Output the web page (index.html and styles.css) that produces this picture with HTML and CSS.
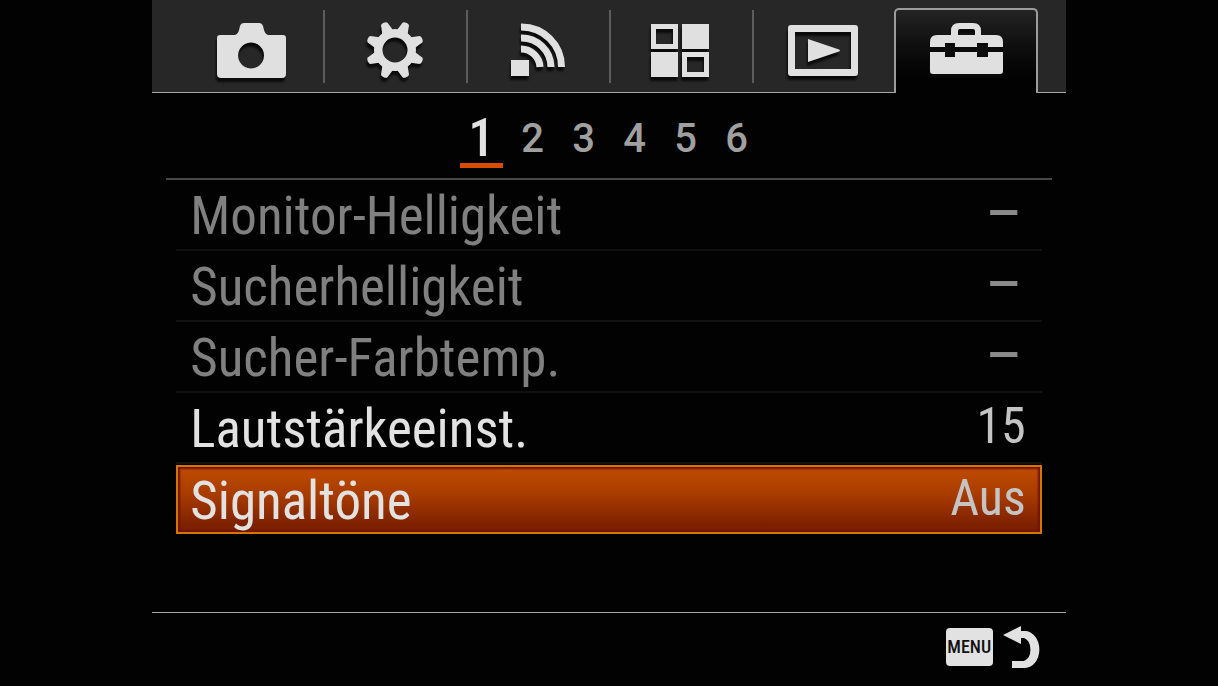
FILE: index.html
```html
<!DOCTYPE html>
<html lang="de">
<head>
<meta charset="utf-8">
<title>Setup</title>
<meta name="viewport" content="width=device-width, initial-scale=1">
<link rel="stylesheet" href="styles.css">
</head>
<body>
<main class="screen">
  <nav class="tabs" aria-label="Menü">
    <button class="tab" type="button" aria-label="Kamera">
      <svg class="icon" width="84" height="72" viewBox="0 0 84 72"><path fill-rule="evenodd" d="M10 25h15q3-1 4-5l1-4q1-3 4-3h15q3 0 4 3l1 4q1 4 4 5h15q3 0 3 3v36q0 4-4 4H11q-4 0-4-4V28q0-3 3-3zM41 32.500a13 13 0 1 0 .1 0z"/></svg>
    </button>
    <button class="tab" type="button" aria-label="Einstellungen">
      <svg class="icon" width="84" height="72" viewBox="-42 -36 84 72"><g transform="translate(0 4)"><path fill-rule="evenodd" d="M0-21A21 21 0 1 1 0 21A21 21 0 1 1 0-21zM0-12.500A12.500 12.500 0 1 0 0 12.500A12.500 12.500 0 1 0 0-12.500z"/><g id="teeth"><path id="tooth" transform="rotate(22.500)" d="M-6-18L-3.500-28Q-3-29.500 0-29.500Q3-29.500 3.500-28L6-18z"/><use href="#tooth" transform="rotate(45)"/><use href="#tooth" transform="rotate(90)"/><use href="#tooth" transform="rotate(135)"/></g><use href="#teeth" transform="rotate(180)"/></g></svg>
    </button>
    <button class="tab" type="button" aria-label="Drahtlos">
      <svg class="icon" width="84" height="72" viewBox="0 0 84 72"><path d="M15 50h18v16H15z"/><g class="arcs"><path d="M25 17A40 40 0 0 1 65.500 57"/><path d="M25 28A29.500 29.500 0 0 1 55 57"/><path d="M25 39A19 19 0 0 1 44 57"/></g></svg>
    </button>
    <button class="tab" type="button" aria-label="Anwendungen">
      <svg class="icon" width="84" height="72" viewBox="0 0 84 72"><path fill-rule="evenodd" d="M13 14h27v25H13zM18 19v15h17V19zM44 14h27v25H44zM13 42h27v25H13zM44 42h27v25H44zM49 47v15h17V47z"/></svg>
    </button>
    <button class="tab" type="button" aria-label="Wiedergabe">
      <svg class="icon" width="84" height="72" viewBox="0 0 84 72"><path fill-rule="evenodd" d="M10 15h64q3 0 3 3v45q0 3-3 3H10q-3 0-3-3V18q0-3 3-3zM14 22v37h56V22zM27 29L58 39.500q2 1 0 2L27 52z"/></svg>
    </button>
    <button class="tab tab-active" type="button" aria-label="Setup" aria-current="page">
      <svg class="icon" width="84" height="72" viewBox="0 0 84 72"><path fill-rule="evenodd" d="M6 37V32q0-7 7-7H27V21q0-8 8-8H49q8 0 8 8v4H72q7 0 7 7v5H64V33H53v4H31V33H21v4zM34 25H51V21q0-2-2-2H36q-2 0-2 2zM6 42H21v5H31V42H53v5H64V42H79V61q0 3-3 3H9q-3 0-3-3z"/></svg>
    </button>
  </nav>

  <nav class="pages" aria-label="Seiten">
    <button class="page page-active" type="button" aria-current="page">1</button>
    <button class="page" type="button">2</button>
    <button class="page" type="button">3</button>
    <button class="page" type="button">4</button>
    <button class="page" type="button">5</button>
    <button class="page" type="button">6</button>
  </nav>

  <section class="settings">
    <button class="row" type="button" disabled><span class="label">Monitor-Helligkeit</span><span class="value value-empty">–</span></button>
    <button class="row" type="button" disabled><span class="label">Sucherhelligkeit</span><span class="value value-empty">–</span></button>
    <button class="row" type="button" disabled><span class="label">Sucher-Farbtemp.</span><span class="value value-empty">–</span></button>
    <button class="row" type="button"><span class="label">Lautstärkeeinst.</span><span class="value">15</span></button>
    <button class="row row-selected" type="button"><span class="label">Signaltöne</span><span class="value">Aus</span></button>
  </section>

  <footer class="footer">
    <button class="back" type="button"><span class="menu-key">MENU</span>
      <svg class="arrow" width="37" height="44" viewBox="0 0 37 44" aria-hidden="true"><path d="M0 10L18 1V6H22A14 18 0 0 1 22 43H9V36H21A9 12 0 0 0 21 13H18V19z"/></svg>
    </button>
  </footer>
</main>
</body>
</html>
```
FILE: styles.css
```css
* { box-sizing: border-box; }

body {
  margin: 0;
  background: #020202;
  color: #e2e2e2;
  font-family: "Roboto Condensed", Roboto, "Liberation Sans", sans-serif;
}

button {
  margin: 0;
  padding: 0;
  border: 0;
  background: none;
  color: inherit;
  font: inherit;
}

.screen {
  display: flex;
  flex-direction: column;
  width: 75%;
  min-height: 100vh;
  margin: 0 auto;
}

.tabs {
  display: grid;
  grid-template-columns: repeat(6, 1fr);
  height: 93px;
  padding: 8px 28px 0;
  border-bottom: 1px solid #a8a8a8;
  background: #272727;
}

.tab {
  display: flex;
  justify-content: center;
  align-items: flex-start;
  padding-top: 2px;
}

.tab + .tab {
  background: linear-gradient(#5c5c5c, #5c5c5c) left 2px / 2px 73px no-repeat;
}

.tabs .tab-active {
  margin: 0 0 -1px -1px;
  padding-top: 0;
  border: 2px solid #9c9c9c;
  border-bottom: 0;
  border-radius: 5px 5px 0 0;
  background: linear-gradient(#242424, #101010 40%, #020202 80%);
}

.icon {
  fill: #e0e0e0;
  filter: drop-shadow(-1px 4px 1px #0a0a0a);
}

.arcs {
  fill: none;
  stroke: #e0e0e0;
  stroke-width: 7;
}

.pages {
  display: flex;
  justify-content: center;
  gap: 8px;
  height: 87px;
  margin: 0 14px;
  padding-top: 17px;
  border-bottom: 2px solid #484848;
}

.page {
  width: 43px;
  height: 58px;
  color: #a0a0a0;
  font-family: Roboto, sans-serif;
  font-size: 40px;
  font-weight: 500;
  line-height: 58px;
}

.page-active {
  border-bottom: 5px solid #d84c00;
  color: #e2e2e2;
  font-family: "Roboto Condensed", Roboto, sans-serif;
  font-size: 53px;
  line-height: 56px;
}

.settings {
  display: flex;
  flex-direction: column;
  padding: 0 24px;
}

.row {
  display: flex;
  justify-content: space-between;
  align-items: flex-start;
  height: 71px;
  padding: 0 16px 0 14px;
  border-bottom: 2px solid #111;
  line-height: 72px;
  text-align: left;
}

.row:disabled { color: #808080; }

.label { font-size: 53px; }

.value {
  color: #c4c4c4;
  font-size: 50px;
  line-height: 66px;
}

.row .value-empty {
  padding-right: 3px;
  color: #8a8a8a;
  font-size: 66px;
  line-height: 68px;
}

.row-selected {
  height: 69px;
  margin-top: 1px;
  padding: 0 14px 0 12px;
  border: 2px solid #d67500;
  box-shadow: inset 0 0 2px 2px #6e1400;
  background: linear-gradient(#c04c00, #a63a00 45%, #7c2000 90%);
  line-height: 68px;
}

.row-selected .value { line-height: 62px; }

.footer {
  display: flex;
  justify-content: flex-end;
  margin-top: 78px;
  padding: 12px 26px;
  border-top: 1px solid #a8a8a8;
}

.back {
  display: flex;
  align-items: center;
  gap: 10px;
}

.menu-key {
  width: 47px;
  border-radius: 4px;
  background: #e2e2e2;
  color: #111;
  font-size: 18px;
  font-weight: 500;
  line-height: 38px;
}

.arrow { fill: #e2e2e2; }
```
